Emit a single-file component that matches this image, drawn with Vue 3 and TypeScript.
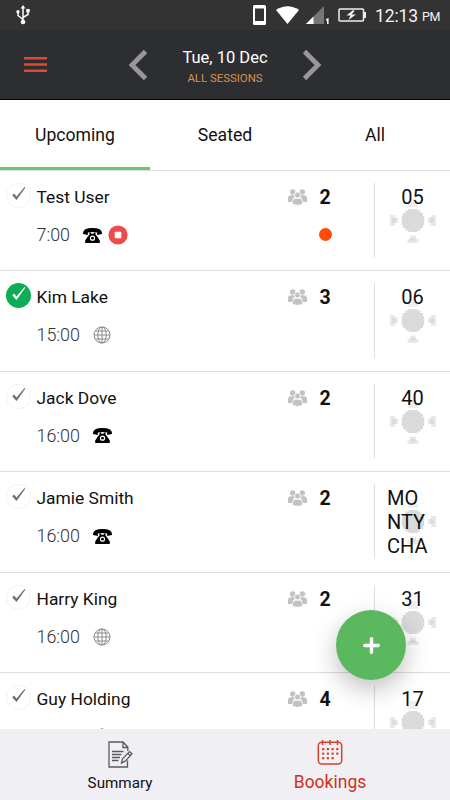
<script setup lang="ts">
interface Booking {
  name: string
  time: string
  source: 'phone' | 'web'
  guests: number
  table: string[]
  confirmed?: boolean
  stopped?: boolean
  alert?: boolean
}

const tabs = ['Upcoming', 'Seated', 'All']
const dots = [
  [10.5, 17], [15.2, 17], [19.9, 17], [24.6, 17],
  [10.5, 21.5], [15.2, 21.5], [19.9, 21.5], [24.6, 21.5],
  [10.5, 26], [15.2, 26], [19.9, 26],
]

const bookings: Booking[] = [
  { name: 'Test User', time: '7:00', source: 'phone', guests: 2, table: ['05'], stopped: true, alert: true },
  { name: 'Kim Lake', time: '15:00', source: 'web', guests: 3, table: ['06'], confirmed: true },
  { name: 'Jack Dove', time: '16:00', source: 'phone', guests: 2, table: ['40'] },
  { name: 'Jamie Smith', time: '16:00', source: 'phone', guests: 2, table: ['MO', 'NTY', 'CHA'] },
  { name: 'Harry King', time: '16:00', source: 'web', guests: 2, table: ['31'] },
  { name: 'Guy Holding', time: '', source: 'web', guests: 4, table: ['17'] },
]
</script>

<template>
  <div class="screen">
    <div class="status">
      <svg class="usb" width="14" height="20" viewBox="0 0 14 20" fill="none" stroke="#fff" stroke-width="1.5">
        <path d="M7 3v14M7 14.500L2 10.500V7M7 12.500l5-3V5.500" />
        <path d="M7 0l2.400 3.500H4.600z" fill="#fff" stroke="none" />
        <circle cx="7" cy="17" r="2.300" fill="#fff" stroke="none" />
        <circle cx="2" cy="6.800" r="1.700" fill="#fff" stroke="none" />
        <rect x="10.300" y="4" width="3.400" height="3.400" fill="#fff" stroke="none" />
      </svg>
      <div class="status-right">
        <svg width="13" height="20" viewBox="0 0 13 20">
          <path fill="#fff" fill-rule="evenodd" d="M1.500 0h10Q13 0 13 1.500v17q0 1.500-1.500 1.500h-10Q0 20 0 18.500v-17Q0 0 1.500 0zM2 3.500v12.500h9V3.500z" />
        </svg>
        <svg class="wifi" width="23" height="18" viewBox="0 0 23 18"><path fill="#fff" d="M0 4Q11.500-3.500 23 4L11.500 18z" /></svg>
        <svg class="signal" width="24" height="18" viewBox="0 0 24 18">
          <path fill="#777" d="M18 0v18H0z" />
          <path fill="#fff" d="M7.500 10.500V18H0z" />
          <path fill="none" stroke="#fff" stroke-width="1.600" d="M20 14l1.800-.8V18" />
        </svg>
        <svg class="battery" width="28" height="14" viewBox="0 0 28 14">
          <rect x="1" y="1" width="24.500" height="12" rx="1" fill="none" stroke="#eee" stroke-width="1.500" />
          <path fill="#eee" d="M26 4h2v6h-2zM15 2L8.500 7.500h4L10.500 12 18 6.500h-4.300L16.500 3z" />
        </svg>
        <span class="clock">12:13</span><span class="pm">PM</span>
      </div>
    </div>

    <header class="header">
      <svg width="23" height="17" viewBox="0 0 23 17"><path fill="#dc4b32" d="M0 1h23v2.400H0zM0 7.300h23v2.400H0zM0 13.600h23V16H0z" /></svg>
      <svg class="prev" width="20" height="32" viewBox="0 0 20 32" fill="none" stroke="#98989c" stroke-width="4.700"><path d="M17.500 2.500L4 16 17.500 29.500" /></svg>
      <div class="date">
        <div class="day">Tue, 10 Dec</div>
        <div class="sessions">ALL SESSIONS</div>
      </div>
      <svg class="next" width="20" height="32" viewBox="0 0 20 32" fill="none" stroke="#98989c" stroke-width="4.700"><path d="M2.500 2.500L16 16 2.500 29.500" /></svg>
    </header>

    <nav class="tabs">
      <div v-for="(tab, i) in tabs" :key="tab" class="tab" :class="{ active: i === 0 }">{{ tab }}</div>
    </nav>

    <main class="list">
      <article v-for="b in bookings" :key="b.name" class="row">
        <div class="check" :class="{ on: b.confirmed }">
          <svg width="25" height="25" viewBox="0 0 25 25"><path d="M6.200 12.300l1.900-1.700 2.400 2.900L18.500 4.100l.8.600-8.800 12.200z" /></svg>
        </div>
        <div class="guest">
          <div class="name">{{ b.name }}</div>
          <div class="meta">
            <span class="time" :class="{ empty: !b.time }">{{ b.time }}</span>
            <svg v-if="b.source === 'phone'" class="phone" width="19" height="15" viewBox="0 0 19 15">
              <path d="M0 5.200Q0 0 9.500 0T19 5.200V6l-4.800 1V4.600Q9.500 3.500 4.800 4.600V7L0 6z" />
              <path fill-rule="evenodd" d="M6.500 4.500h1.700v1.300h2.600V4.500h1.700v2Q14.500 8.500 16.800 12.500V15H2.200v-2.500Q4.500 8.500 6.500 6.500zM9.500 7.600a2.600 2.600 0 1 0 0 5.200a2.600 2.600 0 1 0 0-5.200z" />
              <circle cx="9.500" cy="10.200" r="1.400" />
            </svg>
            <svg v-else class="globe" width="18" height="18" viewBox="0 0 18 18" fill="none" stroke="#8c8c8c" stroke-width="1">
              <circle cx="9" cy="9" r="8" />
              <ellipse cx="9" cy="9" rx="4.200" ry="8" />
              <path d="M9 1v16M1 9h16M2.500 5h13M2.500 13h13" />
            </svg>
            <svg v-if="b.stopped" class="stop" width="20" height="20" viewBox="0 0 20 20">
              <circle cx="10" cy="10" r="9.600" fill="#ef4a4c" />
              <rect x="6.700" y="6.700" width="6.600" height="6.600" rx=".8" fill="#fff" />
            </svg>
          </div>
        </div>
        <svg class="people" width="19" height="17" viewBox="0 0 19 17" fill="#c2c2c2">
          <circle cx="4.700" cy="3" r="2.700" /><circle cx="14.300" cy="3" r="2.700" />
          <path d="M0 13V9.500Q0 6.200 3.200 6.200h3Q7 6.200 7.500 7L5 9.500V13zM19 13V9.500q0-3.300-3.200-3.300h-3q-.8 0-1.300.8L14 9.500V13z" />
          <g stroke="#fff" stroke-width=".8">
            <circle cx="9.500" cy="6" r="3" />
            <path d="M4.400 15.300v-2.500q0-3.500 3.400-3.500h3.400q3.400 0 3.400 3.500v2.500q-5.100 2.100-10.200 0z" />
          </g>
        </svg>
        <div class="party">
          <span class="count">{{ b.guests }}</span>
          <span v-if="b.alert" class="alert"></span>
        </div>
        <div class="table" :class="{ named: b.table.length > 1 }">
          <svg class="seats" width="46" height="50" viewBox="0 0 46 50">
            <g>
              <path d="M0 20h5v2.500h3v5.500H5v3H0z" fill="#e9e9e9" class="left" />
              <path d="M46 20h-5v2.500h-3v5.500h3v3h5z" fill="#e9e9e9" />
              <path d="M17.500 48h11v-4H26v-3.500h-6V44h-2.500z" fill="#e9e9e9" />
              <path d="M20 4h6v4h2v4H18V8h2z" fill="#efefef" />
              <path d="M2 23h4v5H2z" fill="#dcdcdc" class="left" />
              <path d="M40 23h4v5h-4zM20.500 43h5v3h-5z" fill="#dcdcdc" />
            </g>
            <path d="M18.500 14h9v1.500h3V18h2.500v3h1.200v9H33v3h-2.500v2.500h-3V37h-9v-1.500h-3V33H13v-3h-1.200v-9H13v-3h2.500v-2.500h3z" fill="#dadada" />
          </svg>
          <div class="label"><div v-for="line in b.table" :key="line">{{ line }}</div></div>
        </div>
      </article>
    </main>

    <button class="fab" aria-label="Add">
      <svg width="17" height="17" viewBox="0 0 17 17"><path fill="none" stroke="#fff" stroke-width="3.400" stroke-linecap="round" d="M8.500 1.700v13.600M1.700 8.500h13.600" /></svg>
    </button>

    <footer class="bottom">
      <div class="nav">
        <svg width="25" height="27" viewBox="0 0 25 27" fill="none" stroke="#5c5c5e" stroke-width="1.300">
          <path d="M19.800 10V6L15 1H1v25h18.500v-6.500M15 1v5.500h4.800" />
          <path d="M4 10.500h11.500M4 13.500h9.500M4 16.500h8M4 19.500h6.500M13.500 22l1-4.200 7-7.200 2.500 2.300-6.800 7.300zM20 12.500l2.400 2.200" />
        </svg>
        <span>Summary</span>
      </div>
      <div class="nav current">
        <svg width="26" height="27" viewBox="0 0 26 27" fill="none" stroke="#d6412e" stroke-width="1.500">
          <rect x="1.300" y="3.300" width="23.400" height="21.700" rx="3.500" />
          <path d="M5.500 1v5M13 1v5M20.500 1v5" />
          <g fill="#d6412e" stroke="none" transform="translate(-4.600 -7.200)">
            <rect v-for="d in dots" :key="d.join()" :x="d[0] - .8" :y="d[1] - .8" width="2.200" height="2.200" rx=".5" />
          </g>
        </svg>
        <span>Bookings</span>
      </div>
    </footer>
  </div>
</template>

<style>
body { margin: 0; background: #fff; }
</style>

<style scoped>
.screen { position: relative; width: 450px; height: 800px; overflow: hidden; display: flex; flex-direction: column; background: #fff; color: #111; font-family: Roboto, sans-serif; }
svg { display: block; flex: none; }
.status { height: 30px; flex: none; box-sizing: border-box; background: #333; display: flex; justify-content: space-between; padding: 5px 10px 0 16px; }
.status-right { display: flex; color: #f2f2f2; }
.wifi { margin: 1px 0 0 10px; }
.signal { margin: 1px 0 0 7px; }
.battery { margin: 3px 0 0 8px; }
.clock { font-size: 17.5px; line-height: 22px; margin-left: 9px; width: 45px; letter-spacing: -.1px; }
.pm { font-size: 12.5px; line-height: 24px; margin-left: 2px; width: 18px; letter-spacing: -.5px; }
.header { height: 70px; flex: none; box-sizing: border-box; background: #2d2e32; border-bottom: 1px solid #050505; display: flex; align-items: center; padding-left: 24px; }
.prev { margin-left: 81px; }
.date { width: 154px; text-align: center; padding-top: 6px; }
.day { font-size: 16.5px; line-height: 21px; color: #fff; }
.sessions { font-size: 11.4px; line-height: 20px; color: #d9924a; }
.tabs { height: 71px; flex: none; box-sizing: border-box; display: grid; grid-template-columns: repeat(3, 1fr); border-bottom: 1px solid #e0e0e0; }
.tab { font-size: 17.6px; line-height: 71px; text-align: center; height: 67px; }
.tab.active { border-bottom: 3px solid #6ac672; }
.list { height: 558px; flex: none; overflow: hidden; }
.row { height: 100.4px; box-sizing: border-box; border-bottom: 1px solid #dedede; display: flex; align-items: flex-start; padding: 12px 0 0 6px; }
.check { width: 25px; height: 25px; flex: none; border-radius: 50%; box-shadow: inset 0 0 0 1px #f2f2f2; fill: #707070; }
.check.on { background: #0cad54; box-shadow: none; fill: #fff; }
.guest { box-sizing: border-box; width: 257px; padding: 3px 0 0 5.500px; }
.name { font-size: 17.4px; line-height: 22px; }
.meta { display: flex; align-items: center; height: 20px; margin-top: 17px; }
.time { font-size: 17.900px; line-height: 22px; font-weight: 300; color: #333; margin-right: 13px; }
.time.empty { width: 43px; }
.stop { margin-left: 6px; }
.people { margin-top: 6px; }
.party { box-sizing: border-box; width: 36px; display: flex; flex-direction: column; align-items: center; }
.count { font-size: 19.500px; line-height: 30px; font-weight: 700; }
.alert { width: 13px; height: 13px; border-radius: 50%; background: #ff4b05; margin-top: 15px; }
.table { position: relative; height: 75px; width: 74px; margin-left: 31px; border-left: 1px solid #dedede; font-size: 20px; line-height: 24px; text-align: center; }
.seats { position: absolute; left: 14.500px; top: 12px; }
.label { position: relative; padding-top: 2px; width: 75px; }
.named .label { text-align: left; padding-left: 12px; }
.named .left { visibility: hidden; }
.fab { position: absolute; left: 336px; top: 610px; width: 70px; height: 70px; padding: 0; border: 0; border-radius: 50%; background: #5cb85e; display: grid; place-items: center; box-shadow: 0 9px 24px rgba(0, 0, 0, .25); }
.bottom { flex: 1; background: #efeff4; display: flex; justify-content: center; position: relative; }
.nav { width: 210px; display: flex; flex-direction: column; align-items: center; padding-top: 12px; box-sizing: border-box; font-size: 15.2px; }
.nav span { line-height: 20px; margin-top: 5px; }
.current { padding-top: 10px; font-size: 17.500px; color: #d33018; }
.current span { margin-top: 6px; }
</style>
